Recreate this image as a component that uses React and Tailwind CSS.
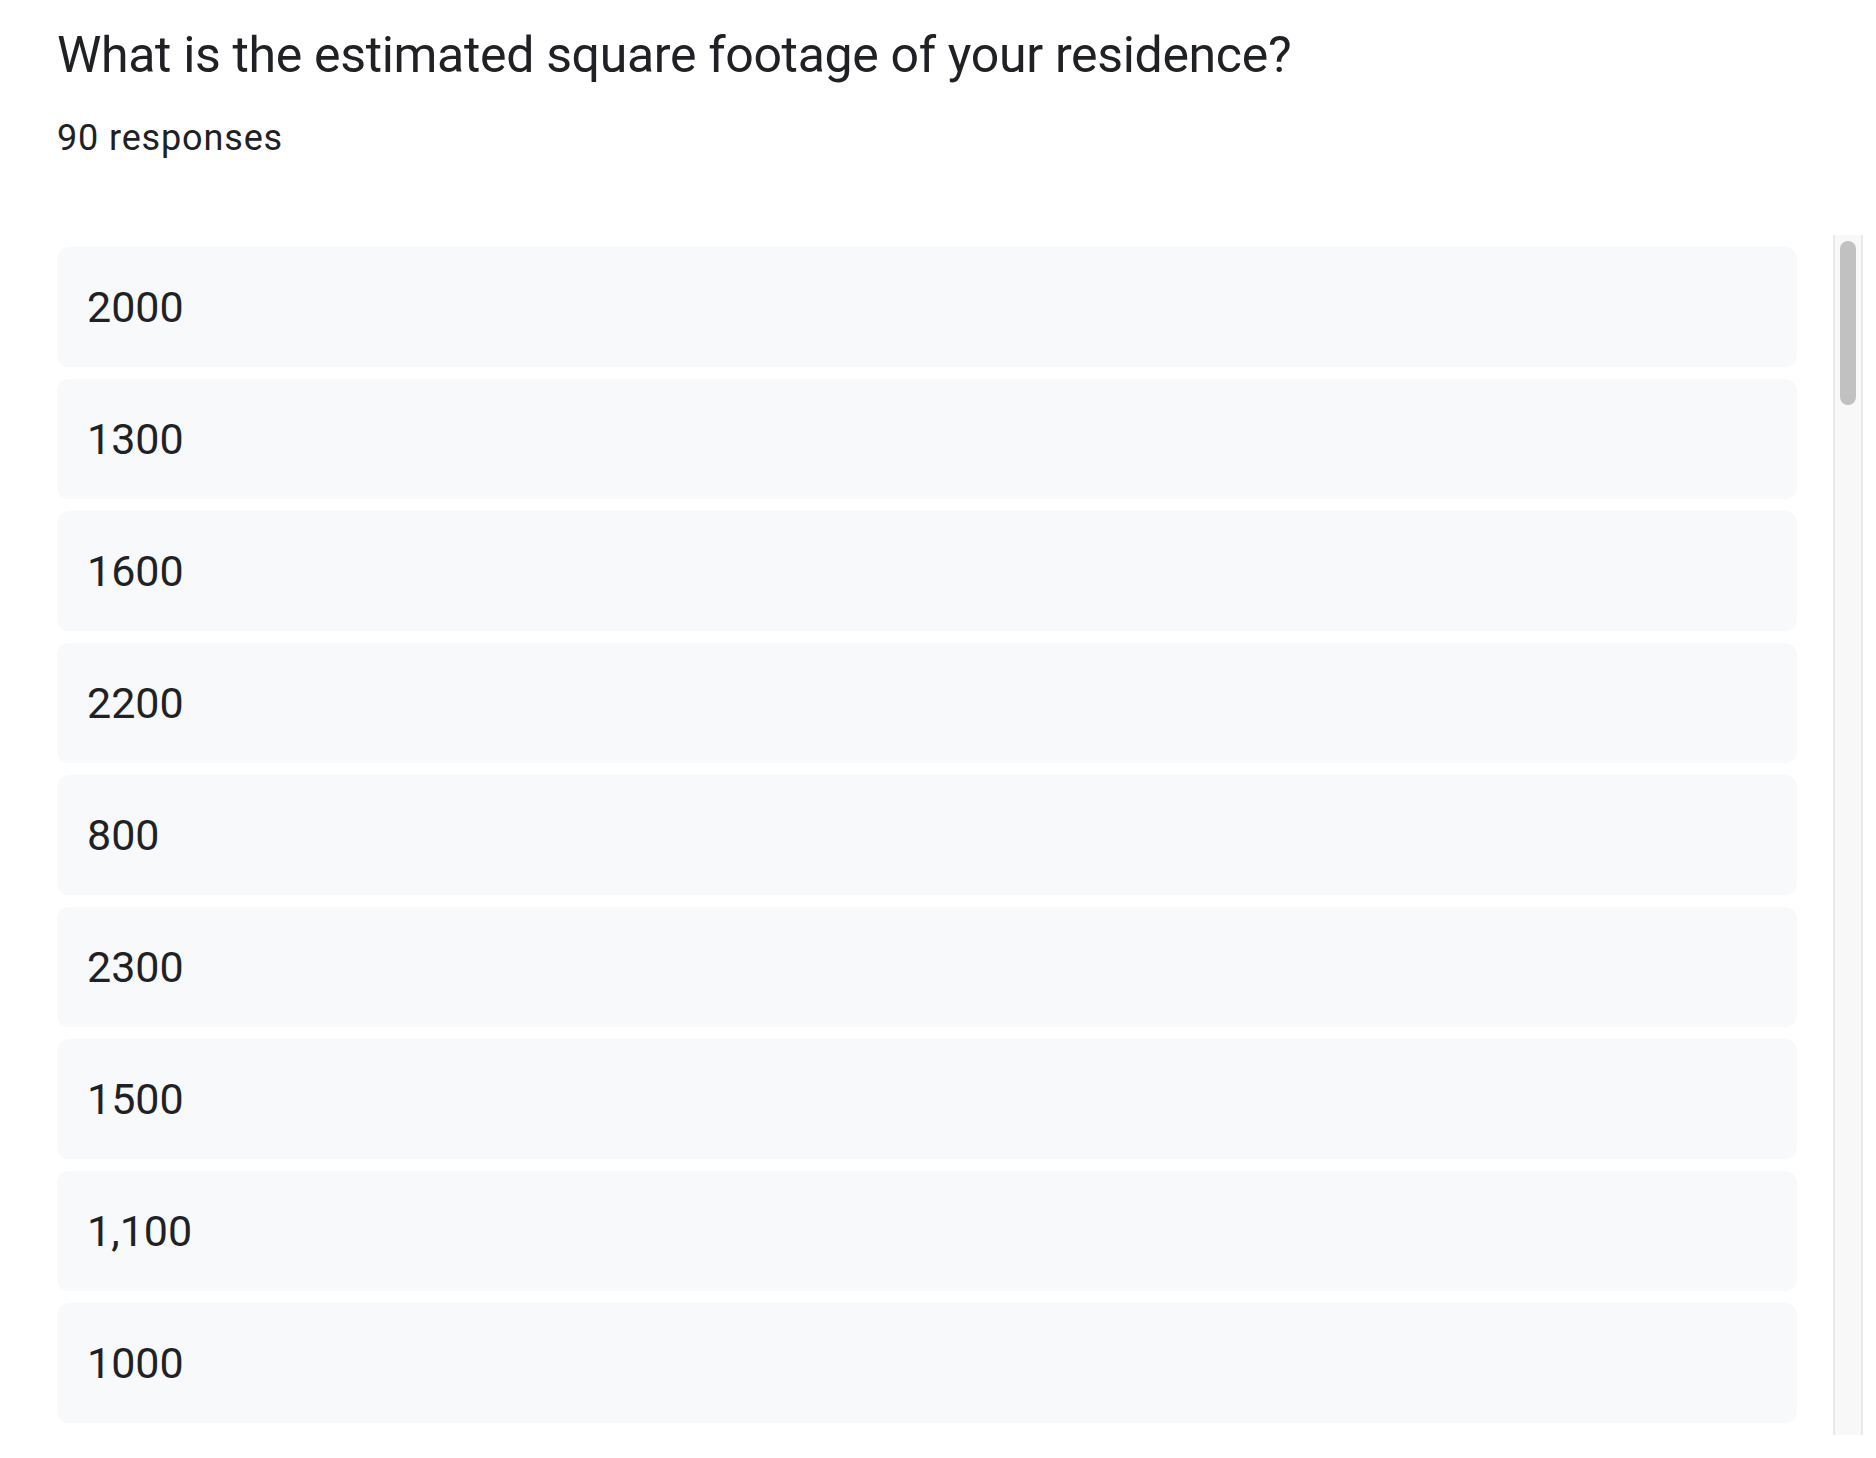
const answers = ["2000", "1300", "1600", "2200", "800", "2300", "1500", "1,100", "1000"];

export default function App() {
  return (
    <div className="min-h-screen bg-white text-[#202124] pl-[57px] pt-[30px]" style={{ fontFamily: "Roboto, sans-serif" }}>
      <h1 className="h-[50px] text-[50px] leading-none font-normal tracking-[-0.33px]">
        What is the estimated square footage of your residence?
      </h1>
      <p className="mt-[40px] h-[36px] text-[36px] leading-none tracking-[0.85px]">90 responses</p>

      {/* answer list + scrollbar */}
      <div className="flex mt-[79px]">
        <div className="w-[1740px] h-[1200px] overflow-hidden pt-[12px] flex flex-col gap-[12px]">
          {answers.map((a, i) => (
            <div key={i} className="h-[120px] shrink-0 rounded-[12px] bg-[#f8f9fa] flex items-center pl-[30px] text-[43px]">
              {a}
            </div>
          ))}
        </div>
        <div className="ml-[36px] w-[30px] h-[1200px] bg-[#f8f8f8] border-x-2 border-[#e8e8e8] pt-[6px] flex justify-center">
          <div className="w-[16px] h-[164px] rounded-full bg-[#c1c1c1]" />
        </div>
      </div>
    </div>
  );
}
